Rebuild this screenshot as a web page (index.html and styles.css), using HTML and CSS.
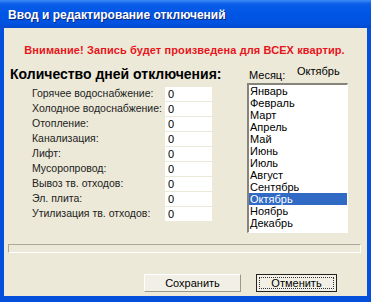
FILE: index.html
```html
<!DOCTYPE html>
<html lang="ru">
<head>
    <meta charset="UTF-8">
    <title>Ввод и редактирование отключений</title>
    <link rel="stylesheet" href="styles.css">
</head>
<body>
    <div class="window">
        <!-- Title bar -->
        <div class="titlebar">Ввод и редактирование отключений</div>

        <div class="client">
            <div class="warning">Внимание! Запись будет произведена для ВСЕХ квартир.</div>

            <div class="main">
                <!-- Days -->
                <div class="days">
                    <div class="heading">Количество дней отключения:</div>
                    <div class="rows">
                        <div class="row"><span class="label">Горячее водоснабжение:</span><span class="field">0</span></div>
                        <div class="row"><span class="label">Холодное водоснабжение:</span><span class="field">0</span></div>
                        <div class="row"><span class="label">Отопление:</span><span class="field">0</span></div>
                        <div class="row"><span class="label">Канализация:</span><span class="field">0</span></div>
                        <div class="row"><span class="label">Лифт:</span><span class="field">0</span></div>
                        <div class="row"><span class="label">Мусоропровод:</span><span class="field">0</span></div>
                        <div class="row"><span class="label">Вывоз тв. отходов:</span><span class="field">0</span></div>
                        <div class="row"><span class="label">Эл. плита:</span><span class="field">0</span></div>
                        <div class="row"><span class="label">Утилизация тв. отходов:</span><span class="field">0</span></div>
                    </div>
                </div>

                <!-- Month -->
                <div class="month">
                    <div class="month-head">
                        <span class="month-label">Месяц:</span>
                        <span class="month-value">Октябрь</span>
                    </div>
                    <div class="listbox">
                        <div class="item">Январь</div>
                        <div class="item">Февраль</div>
                        <div class="item">Март</div>
                        <div class="item">Апрель</div>
                        <div class="item">Май</div>
                        <div class="item">Июнь</div>
                        <div class="item">Июль</div>
                        <div class="item">Август</div>
                        <div class="item">Сентябрь</div>
                        <div class="item selected">Октябрь</div>
                        <div class="item">Ноябрь</div>
                        <div class="item">Декабрь</div>
                    </div>
                </div>
            </div>

            <div class="groove"></div>

            <!-- Buttons -->
            <div class="buttons">
                <div class="btn save">Сохранить</div>
                <div class="btn cancel"><span class="focus">Отменить</span></div>
            </div>
        </div>
    </div>
</body>
</html>
```

FILE: styles.css
```css
/* General */
body {
    margin: 0;
    font-family: 'Liberation Sans', Arial, sans-serif;
    font-size: 11px;
    color: #000;
}
.window {
    width: 371px;
    height: 302px;
    background: #0450dc;
    display: flex;
    flex-direction: column;
    padding: 0 4px 6px 4px;
    box-sizing: border-box;
}

/* Title bar */
.titlebar {
    height: 28px;
    margin: 0 -4px;
    padding-left: 8px;
    line-height: 30px;
    color: #fff;
    font-weight: bold;
    font-size: 12px;
    text-shadow: 1px 1px 0 #0a2a80;
    background: linear-gradient(#3c8cf6 0, #0a5de8 4px, #0055e5 50%, #0152df 85%, #0349cc 100%);
}

/* Client area */
.client {
    flex: 1;
    background: #ece9d8;
    display: flex;
    flex-direction: column;
}
.warning {
    margin-top: 15px;
    padding-right: 2px;
    line-height: 14px;
    text-align: center;
    color: #e8141b;
    font-weight: bold;
    font-size: 11px;
    letter-spacing: 0.1px;
}
.main {
    display: flex;
}

/* Days */
.days {
    width: 243px;
}
.heading {
    margin-top: 9px;
    padding-left: 6px;
    font-size: 14px;
    font-weight: bold;
    line-height: 16px;
    white-space: nowrap;
}
.rows {
    margin-top: 5px;
    padding-left: 28px;
}
.row {
    display: flex;
    height: 15px;
}
.label {
    width: 133px;
    line-height: 13px;
    color: #222;
    white-space: nowrap;
    font-size: 10.5px;
}
.field {
    width: 47px;
    height: 14px;
    line-height: 14px;
    padding-left: 3px;
    box-sizing: border-box;
    background: #fff;
}

/* Month */
.month {
    width: 101px;
}
.month-head {
    height: 26px;
    position: relative;
}
.month-label {
    position: absolute;
    left: 2px;
    top: 12px;
}
.month-value {
    position: absolute;
    left: 50px;
    top: 8px;
}
.listbox {
    border-top: 2px solid #868479;
    border-left: 2px solid #868479;
    border-right: 1px solid #fff;
    border-bottom: 1px solid #fff;
    background: #fff;
    height: 147px;
    font-size: 11px;
}
.item {
    height: 12px;
    line-height: 12px;
    padding-left: 1px;
}
.item.selected {
    background: #316ac5;
    color: #fff;
}

/* Groove */
.groove {
    margin: 11px 6px 0 4px;
    height: 9px;
    border-top: 1px solid #aca899;
    border-left: 1px solid #aca899;
    border-bottom: 1px solid #fff;
    border-right: 1px solid #fff;
    box-sizing: border-box;
}

/* Buttons */
.buttons {
    display: flex;
    margin-top: 21px;
    padding-left: 140px;
    gap: 15px;
}
.btn {
    height: 18px;
    line-height: 16px;
    text-align: center;
    box-sizing: border-box;
    background: #f2f0e6;
}
.save {
    width: 97px;
    border-top: 1px solid #fff;
    border-left: 1px solid #fff;
    border-right: 1px solid #9a988c;
    border-bottom: 1px solid #9a988c;
}
.cancel {
    width: 81px;
    border: 1px solid #222;
    padding: 2px;
    line-height: 12px;
}
.focus {
    display: block;
    border: 1px dotted #333;
    height: 12px;
    line-height: 11px;
    box-sizing: border-box;
}
```
